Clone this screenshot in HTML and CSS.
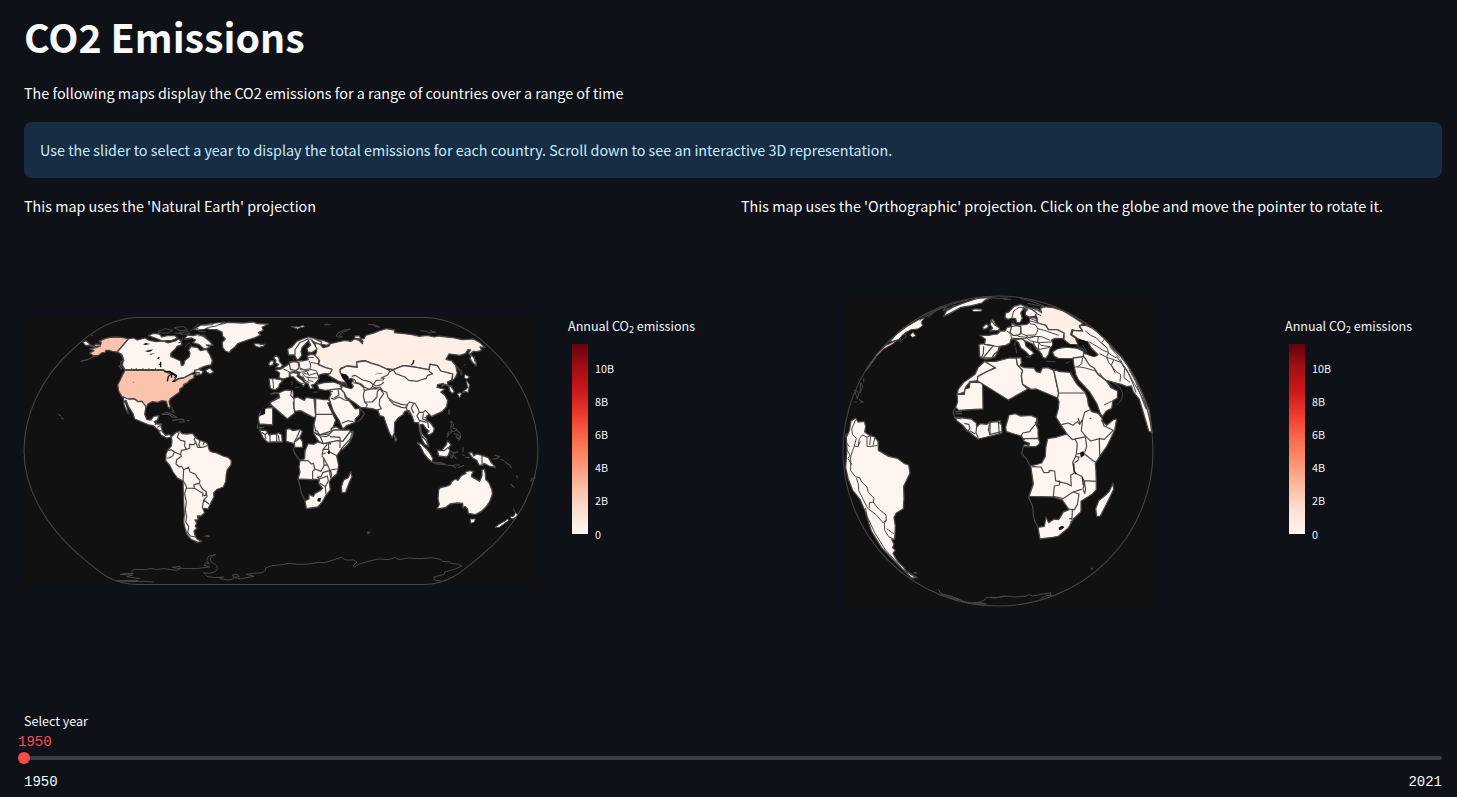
FILE: index.html
```html
<!DOCTYPE html>
<html lang="en">
<head>
<meta charset="utf-8">
<title>CO2 Emissions</title>
<link rel="stylesheet" href="styles.css">
</head>
<body>
<main class="page">
  <h1 class="title">CO2 Emissions</h1>
  <p class="intro">The following maps display the CO2 emissions for a range of countries over a range of time</p>
  <div class="alert"><span class="alert-text">Use the slider to select a year to display the total emissions for each country. Scroll down to see an interactive 3D representation.</span></div>
  <section class="columns">
    <div class="column">
      <p class="caption cap-one">This map uses the 'Natural Earth' projection</p>
      <div class="chart">
        <div class="plot">
          <svg class="map" width="516" height="270" viewBox="23 316 516 270">
            <rect x="24" y="317" width="514" height="268" fill="#111"/>
            <!-- North America -->
            <g transform="translate(10 305) scale(.33333)">
              <path class="us" d="M238 122L252 122 258 117 272 118 274 112 267 109 285 101 300 97 318 96 340 98 355 102 322 141 306 139 298 136 288 136 285 143 276 143 264 152 248 151 239 144 252 137 240 131 258 128 272 123 252 125Z"/>
              <path class="ru" d="M218 112L228 107 242 119 232 122 225 120Z"/>
              <path class="c" d="M355 102L370 99 382 105 405 99 418 106 440 110 460 108 474 114 496 108 505 102 513 107 516 119 501 124 496 132 483 144 482 154 499 162 512 168 514 182 521 180 524 167 538 155 540 145 536 135 543 125 562 127 571 137 590 133 600 150 607 166 604 179 583 184 568 191 552 201 535 211 520 219 506 220 490 230 499 213 490 205 473 202 460 194 345 194 337 180 340 167 337 151 322 141Z"/>
              <path class="us" d="M345 196L460 196 474 204 490 206 500 215 490 230 508 221 521 219 545 207 553 209 551 220 538 226 533 233 522 238 518 247 510 251 508 262 495 271 481 281 477 290 481 304 478 311 473 305 469 289 456 287 443 292 427 290 414 297 409 306 401 302 396 289 384 290 375 282 353 284 335 274 326 258 323 240 331 224 339 207Z"/>
              <path class="c" d="M340 276L355 282 373 282 384 290 396 289 408 305 404 328 411 344 423 345 431 334 447 332 442 345 433 350 440 357 455 357 453 365 458 381 467 391 479 388 484 396 470 399 453 390 444 374 430 362 417 360 396 351 374 342 369 326 355 304 348 286 344 288 350 304 355 326 348 315 342 299Z"/>
              <path class="c" d="M552 197L566 193 580 199 575 207 559 211 556 203 570 204M588 195L600 189 611 201 600 207 588 200Z"/>
              <path class="l" d="M440 350L435 360M455 357L442 368M458 378L446 377M456 328L470 322 482 326 500 337 487 336 476 328ZM486 346L505 343 520 343 523 350 505 351M530 347h8M486 305v8l6 5M484 320l10 2M145 328l8 5M154 338l7 5M212 169L235 163 250 155 264 152M322 141L334 148 342 166 332 171 331 181 342 190M325 181l11 13M244 89l5 3M365 194v-4m14 4v-4m20 4v-4m18 4v-4m20 4v-4"/>
              <path class="c" d="M585 69L607 59 635 57 654 52 697 54 730 51 742 56 775 57 756 67 760 76 745 83 752 90 735 98 713 105 696 111 683 116 674 127 664 134 658 143 646 138 638 127 637 112 646 102 638 93 636 81 620 74 598 73Z"/>
              <path class="c" d="M732 117L740 115 752 118 766 118 760 124 747 127 736 123Z"/>
              <path class="c" d="M524 102L532 90 550 92 564 88 580 94 598 108 609 121 589 120 600 127 582 132 568 119 548 113 557 105 545 99Z"/>
              <path class="c" d="M415 92L430 85 448 87 456 96 472 92 495 92 502 99 486 106 458 108 435 99Z"/>
              <path class="c thin" d="M553 72L572 61 602 56 645 51 618 63 596 67 583 73 560 75Z"/>
              <path class="l thin" d="M443 80L466 71 488 76 474 84 454 84ZM492 68L520 64 534 75 510 77ZM508 82l28-2 4 7-27 1ZM518 97l-3 13-10 4M525 126l12-13 8 9-8 5M565 78l23 3M540 76l25-6M550 69l17-13M580 61l30-2M590 98l-7-9-18 4M515 86l-22-2"/>
              <path fill="#111" d="M399 118l9-4 12 3-14 3ZM405 138l24-5-6 6-9 2ZM418 147l18-2-14 4Z"/>
              <path d="M443 162l5-5M452 170v17m-5-10l4 2M463 200l16-1 10 7M472 229l3-15 9-7 1 11M485 207l14 4-5 8M487 230l10-3" fill="none" stroke="#111" stroke-width="4"/>
              <circle cx="370" cy="232" r="1.5" fill="#654"/>
            </g>
            <!-- South America -->
            <g transform="translate(10 420) scale(.33333)">
              <path class="c" d="M484 50L497 38 510 33 516 41 531 42 548 40 556 52 568 61 580 64 592 70 597 88 602 95 620 99 639 108 654 112 664 122 663 135 652 149 649 162 647 185 640 201 620 209 611 219 612 231 603 248 594 267 578 264 584 278 573 288 562 288 565 299 555 300 560 309 556 319 561 325 552 333 556 349 562 358 576 364 563 367 542 357 530 342 524 320 521 306 523 285 521 250 519 183 502 174 489 156 479 136 467 122 468 103 473 90 484 78 486 65Z"/>
              <path class="l" d="M508 36L502 51 512 61 525 64 524 79 529 88 514 91 512 104 493 96 484 89 473 92M493 96L488 108 477 114 470 114M512 101L514 109 500 119 498 132 508 141 514 138 521 149 520 168 519 182 527 195 530 204 553 205 552 194 568 190 570 181 562 173 557 163 540 156 536 142 521 149M529 88L540 84 538 73 552 74 557 66 552 58 560 49M557 66L563 82 579 82 591 77M570 62L566 74 571 82M583 65L579 75M553 205L568 214 579 220 578 228 587 226 589 215 578 208 569 193M589 216L591 230 581 240 577 263M581 240L597 252M529 204L524 220 529 246 526 270 530 290 527 306 536 320 533 338 541 348 556 351M584 349l8-2 6 2-6 3"/>
              <path class="l thin" d="M431 486L401 484 353 485 320 482 384 481M390 476L350 470 368 465 331 463 350 460 370 461 364 455 372 448 410 449 418 445 440 448 462 446 500 451 511 446 486 442 509 439 511 445 560 446 581 443 599 441 583 436 587 428 598 432 590 421 595 409 617 403 602 413 602 424 619 436 623 446 614 456 599 460 581 458 591 469 615 473 640 471 629 476 655 480 672 476 668 465 681 462 687 470 673 472 690 477 715 472 732 469 708 463 732 460 757 458 768 450 765 445 785 437 810 435"/>
            </g>
            <!-- Europe, Asia and northern Africa -->
            <g transform="translate(250 305) scale(.33333)">
              <path class="ru" d="M195 102L220 106 240 114 232 121 210 117 219 128 236 124 241 116 263 111 285 106 302 109 314 102 327 106 337 116 339 109 329 102 315 100 313 93 328 92 333 102 342 101 347 91 375 83 386 78 409 71 434 75 433 83 462 86 486 89 508 94 531 91 553 96 566 93 590 96 609 98 637 104 670 102 689 112 705 128 690 126 695 136 681 140 670 139 661 147 671 157 678 170 679 183 667 172 660 160 663 153 655 144 662 135 654 134 646 146 630 151 597 147 588 163 606 168 617 181 622 205 613 222 607 225 608 207 600 205 572 198 562 182 540 177 537 194 500 187 486 184 460 182 430 194 410 192 386 181 367 176 345 167 320 170 322 185 290 183 272 190 270 202 281 211 290 235 270 231 245 217 234 211 246 194 225 188 205 178 209 168 194 154 200 140 196 125Z"/>
              <path class="c" d="M270 194L290 183 322 187 320 171 345 168 367 176 386 181 410 192 430 194 460 182 500 187 537 195 540 178 562 182 572 198 600 205 608 207 605 224 592 232 594 241 603 245 613 259 606 266 600 258 596 244 586 238 576 244 581 235 563 239 561 247 578 251 585 253 572 261 584 270 593 286 590 305 576 320 558 328 545 335 538 328 530 333 528 344 541 353 553 370 550 382 538 390 531 386 537 378 528 371 519 358 511 359 514 382 522 393 530 401 534 421 527 417 515 398 509 377 506 353 493 353 486 333 477 316 464 319 459 329 444 339 434 353 433 383 427 397 419 386 407 353 401 335 389 332 384 316 371 312 343 308 333 308 315 294 300 284 290 278 281 262 271 252 275 242 290 247 304 251 310 244 303 233 310 228 305 220 296 222 287 210 272 205Z"/>
              <path fill="#111" d="M271 208L286 207 296 215 293 224 301 237 307 250 292 247 290 235 278 221Z"/>
              <path class="l" d="M305 214L315 211 338 225 345 226 361 231 369 239 379 226 399 225 402 220 393 219 413 210 418 201 430 194M306 222L314 224 318 232 334 237 344 247 358 253 368 244 369 238 378 243 393 239 402 231M367 245L378 249 390 246 398 257 410 262 414 277 430 290 454 298 471 300 478 291 495 295 505 313 508 322 520 322 526 316 538 328M343 256L358 253 372 251 390 252 382 260 381 276 367 291 344 291M343 256L340 273 344 291 352 299 347 309M390 252L401 266 389 283 388 300 394 311 379 316M310 233L328 237 341 248 343 256M417 284L431 298 454 307 469 309 473 297M466 305L474 318 478 329M491 296L484 309 491 325M508 322L501 332 510 350M520 325L518 342 533 349 536 369M510 347L530 352M430 194L437 206 465 216 476 226 503 229 511 225 529 220 532 212 548 206 537 199M591 231L608 226M593 241L608 244M410 192L421 199"/>
              <path fill="none" stroke="#111" stroke-width="4" d="M483 180l7-6 1-9"/>
              <path fill="none" stroke="#7a7776" stroke-width="2.5" d="M376 209l6-4h15M393 219h11"/>
              <path class="c" d="M201 238L222 233 249 231 263 235 272 239 275 251 253 254 225 256 207 252Z"/>
              <path class="c" d="M241 254L271 251 283 264 286 278 299 289 308 301 316 312 329 310 329 329 316 342 315 352 290 362 280 371 276 367 267 346 250 319 241 293 237 278 243 269Z"/>
              <path class="l" d="M242 279L253 283 267 276 284 285 297 287M264 254L267 270 253 278M275 355L294 347 311 351M329 311L344 325 334 341 320 351M268 229L285 240M269 242L276 247 274 232 283 231 292 244M203 231L205 237"/>
              <path class="c" d="M113 132L127 125 140 109 157 102 175 96 190 99 204 106 215 111 212 119 196 113 185 106 192 116 201 132 185 143 173 141 171 130 182 120 175 108 166 117 156 128 153 140 156 151 146 163 140 163 134 150 116 150Z"/>
              <path class="l" d="M135 149L135 135 149 113 173 102 188 102M173 102L180 118"/>
              <path class="c" d="M118 170L130 171 147 167 158 168 175 164 171 153 182 148 192 149 207 164 205 179 227 188 246 193 241 205 217 207 205 211 207 222 194 237 184 240 191 249 180 251 174 236 165 232 158 218 147 211 149 203 130 200 118 203 118 216 100 222 87 218 89 204 76 195 94 192 107 183 119 176Z"/>
              <path class="de" d="M118 174L130 170 145 172 147 190 137 197 121 193Z"/>
              <path class="c" d="M57 222L68 220 92 224 98 227 88 238 86 247 75 255 61 250Z"/>
              <path class="c" d="M119 205L133 202 145 206 141 214 156 225 166 235 160 245 155 237 141 227 130 216 122 215Z"/>
              <path class="c" d="M78 151L87 159 88 169 98 180 93 187 77 188 86 178 76 174 78 166 71 159ZM56 177L62 167 71 168 70 179 59 183Z"/>
              <path class="l thin" d="M68 222L71 251M147 170L150 190 164 194 181 191 182 180 178 167M183 172L206 177M172 157L192 158M174 147L194 149M147 190L137 197 150 202 171 199 176 211 200 204 205 213M150 193L174 197 183 193 200 198 203 206M157 205L166 215 180 218 203 219M158 212L165 226 178 233M174 216L176 227 190 229M160 204L175 208M100 192L119 201M129 159l5 11M146 235l16 0M126 228v12M135 247l13 0M190 262l13-1M237 261l12-2M150 202L134 205M140 204L150 213"/>
              <path class="c" d="M62 267L68 264 86 265 89 278 66 289 47 303 36 315 29 326 25 342 28 357 68 360 68 308 47 309 63 299 112 342 134 324 130 292 138 288 131 280 129 257 107 255 85 264Z"/>
              <path fill="#111" d="M44 303L61 292 60 301 46 311 45 327 29 333 34 316Z"/>
              <path class="c" d="M132 280L142 276 163 286 168 277 192 281 197 334 191 338 152 317 135 319 132 307Z"/>
              <path class="c" d="M197 280L222 284 235 283 241 293 233 294 248 327 257 345 250 365 243 372 245 383 239 395 239 414 220 419 205 407 191 386 190 365 197 337Z"/>
              <path class="l" d="M197 328H246M195 385L207 391 220 386 241 379M125 256L122 271 132 281M86 276L62 292 62 300M192 358L198 381"/>
              <path class="c" d="M245 370L258 365 270 372 274 380 269 386 279 390 292 391 300 381 310 378 308 394 295 417 277 434 248 417 240 395Z"/>
              <path class="c" d="M29 375L49 377 58 391 62 388 81 387 84 383 95 389 97 411 61 411 53 412 39 398Z"/>
              <path class="c" d="M109 373L119 371 129 377 151 373 157 380 150 396 141 404 150 410 152 425 134 418 127 414 108 409Z"/>
              <path class="l" d="M24 358L22 369 35 370M25 367h18M35 382L46 389 52 382M45 389L48 402M60 390V409M80 388V410M85 390L88 410M150 375L140 398 132 412M269 386L276 398 293 406 277 414"/>
              <path class="c thin" d="M124 65L145 66 160 61 164 65 150 68 143 72 136 69Z"/>
              <path class="l thin" d="M222 59h20M233 56l-6 3M258 94L264 84 280 76 301 72 288 78 275 83 267 92 278 96 263 96ZM354 57l17 3 4 5 14 1-20-8M510 77l22 2 4 5 21-2-18-5M609 171L620 184 630 199 634 212M622 184l4 9M641 183l6-7M673 155l2 17M623 187L634 197 637 209M597 314L600 322 596 328ZM603 348L611 356 609 368 604 362ZM609 370L621 372 614 379 603 379M612 386L625 389 632 401 624 407M591 390L597 379M523 338l12-3M603 362v11M638 262l8 1"/>
              <path class="c thin" d="M645 208L659 216 649 222 643 218ZM649 225L658 238 655 262 642 259 636 261 653 249ZM622 266L632 263 634 267 629 278Z"/>
            </g>
            <!-- Southern Africa, Oceania and Antarctica -->
            <g transform="translate(250 430) scale(.33333)">
              <path class="c" d="M133 37L150 24 158 35 158 52 134 52ZM150 92L164 86 165 62 174 41 191 43 203 36 220 41 235 37 241 42 238 22 248 12 278 34 300 5 307 8 301 26 277 53 260 78 266 106 261 131 243 146 238 157 241 180 228 196 216 217 203 231 169 236 165 212 177 207 177 193 190 199 195 190 210 182 218 175 206 160 208 149 188 149 144 147 150 126 147 111Z"/>
              <path class="c" d="M193 8L210 14 238 12 250 0 300 0 300 5 278 34 262 32 220 41 210 18Z"/>
              <path class="l" d="M150 92L174 92 184 102 190 100 195 117 188 124 188 147 205 149M195 117L213 124 222 107 221 84 216 78 219 58 231 44 229 38M221 84L232 104 237 115 242 144 245 135 241 120 260 117M222 107L232 104M240 121L218 128 213 140 202 142 208 147 232 138 235 152 226 170 210 160M226 170L228 193M218 58L235 58 241 67 261 77M236 38V58M133 52L130 60 140 80 150 90M144 148L150 168 154 189 164 211M200 0L210 18 228 20 240 14M240 20L270 22 270 54M219 72L227 68"/>
              <path d="M233 69l3-4 2 3-2 4M205 207l6-1-2 7-5-1Z" fill="#111" stroke="#111" stroke-width="4"/>
              <path class="c" d="M302 125L306 140 298 157 287 187 276 188 274 170 281 150 295 143Z"/>
              <path class="c" d="M433 16L441 30 436 34ZM502 37L514 42 530 57 541 71 549 86 545 96 533 85 521 70 512 51ZM512 0L513 15 527 30 537 50 524 43 516 29ZM562 60L575 61 589 44 592 33 603 43 596 55 600 62 594 77 588 81 566 78Z"/>
              <path class="c" d="M656 68L667 67 671 78 680 72 696 76 715 83 724 98 737 112 717 108 702 100 697 106 687 105 680 91 668 84Z"/>
              <path class="l" d="M696 77V105M567 62L582 62 596 51M548 96L571 98 588 104 554 101ZM591 105l17 2 11 7M610 105l20 0M603 64L610 68 625 66 610 70 607 84 603 83 603 71M611 77l8 10M639 52v15M646 82h12M637 74l7 2M625 113l17-7M618 0L630 9 632 23 623 26 617 17M605 0l-3 10M590 22l9-12M728 88L744 84 750 77M734 75l13 5M752 87l12 6M765 96L780 106 784 115M782 162L793 173M799 136L803 145M841 154L847 146 856 142M351 306l9 0-3 4-6-1"/>
              <path class="c" d="M658 122L671 124 666 132 664 139 689 154 696 137 696 120 703 117 706 132 707 148 717 158 726 180 727 193 719 215 708 231 693 245 676 254 655 250 653 237 645 229 639 234 638 220 622 219 600 222 586 233 561 237 568 223 564 207 566 180 571 173 589 169 601 164 605 155 616 147 624 151 634 137 648 130 646 126Z"/>
              <path class="c thin" d="M660 267L677 267 672 277 663 280ZM735 292L747 283 763 274 773 267 777 271 748 292ZM780 261L792 258 796 248 804 255 795 263 786 267Z"/>
              <path class="l thin" d="M790 235L796 248M90 405L116 400 145 403 178 402 205 397 225 398 264 385 275 382 285 390 310 390 321 396 309 408 313 411 329 402 355 394 385 387 418 389 435 382 447 389 475 384 510 386 545 383 572 388 578 394 600 396 606 401 625 402 636 408 613 418 584 426 583 433 551 441 554 450 577 454"/>
            </g>
            <path class="frame" d="M138 317.5H424C449 317.5 474 332 488 346C522 376 538 416 538 451C538 486 519 523 484 553C463 571 449 584.500 424 584.500H138C113 584.500 101 574 78 554C43 523 24 486 24 451C24 416 40 378 74 348C92 331 113 317.500 138 317.500Z"/>
          </svg>
        </div>
        <div class="legend">
          <div class="legend-title">Annual CO<span class="sub">2</span> emissions</div>
          <div class="scale">
            <div class="bar"></div>
            <div class="ticks"><span>10B</span><span>8B</span><span>6B</span><span>4B</span><span>2B</span><span>0</span></div>
          </div>
        </div>
      </div>
    </div>
    <div class="column">
      <p class="caption cap-two">This map uses the 'Orthographic' projection. Click on the globe and move the pointer to rotate it.</p>
      <div class="chart">
        <div class="plot">
          <svg class="map" width="312" height="312" viewBox="842 295 312 312">
            <rect x="843" y="296" width="310" height="310" fill="#111"/>
            <!-- North Atlantic -->
            <g transform="translate(835 285) scale(.33333)">
              <path class="c" d="M326 94L334 78 357 65 388 53 427 40 470 37 450 46 441 54 410 62 378 67 349 83Z"/>
              <path class="c thin" d="M410 74L420 72 441 73 440 78 417 80ZM164 171L188 145 217 124 253 103 268 99 259 112 263 122 249 132 228 134 208 145 190 164Z"/>
              <path class="us thin" d="M93 258L103 240 126 207 153 181 187 165 174 177 145 193 128 210Z"/>
              <path class="l thin" d="M194 164L202 151 212 146 213 156 199 166ZM190 166l10 7M254 106L281 84 293 85 278 98M290 83L317 70 335 65 325 74 342 70 360 61M324 77l18-5M77 294L75 325 83 306 79 293M86 280l0 12M63 315L71 326 67 341 58 315M71 342L82 350 75 355M59 351h8M78 349l8 3M270 96L310 74 350 58 400 44"/>
              <path class="c thin" d="M225 151l9-9 9 11-10 4Z"/>
              <path class="c" d="M432 178L448 176 470 182 496 186 489 197 481 215 466 221 448 222 434 215ZM443 126L455 116 461 123 455 131 445 133Z"/>
              <path class="c" d="M466 108L474 102 482 118 490 128 495 136 465 138 474 130 472 120Z"/>
              <path class="l" d="M446 184L445 205 440 217"/>
              <path class="c" d="M450 228L463 231 479 229 483 245 460 259 436 271 429 275 428 287 405 290 393 305 387 322 366 328 370 312 386 292 408 277 420 268 429 248Z"/>
              <path class="c" d="M366 328L388 328 390 312 403 308 405 291 439 293 443 300 444 372 371 376 362 367 368 350Z"/>
              <path class="c" d="M360 398L376 398 409 402 424 414 425 425 435 416 456 418 464 412 496 407 501 444 468 453 430 462 417 453 396 436 382 420 366 408Z"/>
              <path class="l" d="M362 367L354 380 360 397 378 397M359 380h22M361 386h20M388 415L401 418 405 429 398 440 388 428M405 438L421 447M425 425L423 443 430 458M464 415L460 434 466 452M491 410L490 429 495 448M361 398L380 402"/>
            </g>
            <!-- Europe, north-east Africa and Asia -->
            <g transform="translate(990 285) scale(.33333)">
              <path class="ru" d="M105 63L122 69 142 72 155 83 151 71 161 65 190 68 220 78 246 94 278 115 268 126 283 137 258 138 246 134 242 149 256 159 264 178 241 179 222 164 222 144 201 134 175 134 167 121 143 114 141 98 132 83Z"/>
              <path class="c" d="M45 98L46 85 58 80 72 64 92 58 106 65 127 74 140 84 135 93 118 96 107 91 106 80 113 73 101 70 92 84 97 100 91 112 80 113 77 101 66 99 54 103Z"/>
              <path class="c" d="M-30 151L-3 151 10 148 22 147 32 138 45 138 51 127 64 125 65 115 81 121 111 118 119 112 118 97 137 99 143 114 167 121 175 134 201 134 222 144 220 161 195 160 184 166 191 180 181 188 176 207 167 221 158 216 151 202 139 191 128 177 109 169 84 161 63 163 60 174 47 181 28 184 24 198 12 208 5 219 -20 218 10 182 -16 178 -14 163Z"/>
              <path fill="#111" stroke="#4a4a4a" stroke-width="3" d="M-34 150L-14 163 -16 178 -36 181 -60 180 -60 150Z" visibility="hidden"/>
              <path class="de" d="M65 124L81 122 92 126 92 146 82 151 69 151 60 142Z"/>
              <path class="c" d="M76 165L96 161 105 169 108 184 125 197 132 205 120 214 109 202 92 188 86 173ZM5 107L14 120 29 129 25 136 0 137 8 130 0 118Z"/>
              <path class="c" d="M187 201L205 190 231 186 263 190 281 199 281 214 263 220 233 221 205 220 193 214Z"/>
              <path class="c" d="M268 121L288 121 309 130 320 139 344 161 369 192 398 219 419 249 439 285 461 333 478 377 487 444 476 438 462 390 448 343 430 321 424 303 411 305 394 298 370 292 347 285 319 264 300 248 287 229 280 217 281 203 300 211 313 215 324 209 303 188 293 170 278 169 262 160 246 149 248 136 278 138Z"/>
              <path fill="#111" d="M266 162L283 166 294 173 292 180 305 195 322 213 303 212 291 199 278 181ZM185 184L191 169 206 166 204 171 216 168 231 177 255 180 251 188 223 184 203 191Z"/>
              <path class="c" d="M249 219L282 215 298 240 313 250 327 271 349 288 363 308 383 318 382 339 369 347 365 370 349 378 337 395 331 386 321 357 299 321 265 284 258 270 252 243Z"/>
              <path class="l thin" d="M253 246L270 246 286 249 314 257 326 271M278 218L275 237 263 245M342 360L365 349 373 345M366 291L389 306 398 325 395 344 381 359M329 264L344 284 370 306M298 171L319 183 337 195 355 202 350 217 371 224 392 232 405 249M345 161L335 173 351 189 357 206 379 219M358 185L373 201 390 220M329 206L350 217 356 232 378 259 392 269 390 290M371 224L364 241 376 264M391 224L404 250 402 278 420 292M398 240L415 265 430 299 438 323M418 255L437 290 450 325 468 372M286 138L302 151 318 158 342 182M379 214L409 252 427 286 455 334 475 382"/>
              <path class="l thin" d="M92 122L93 145 107 151 137 150 144 133 136 119 119 116M141 130L169 138 206 151M120 100L139 108M118 107L143 114M50 137L63 148 64 161M64 159L86 161 103 161 130 154 155 155 180 166M84 154L108 157 122 168 145 173 184 171M105 151L120 159 137 154M145 154L143 169 153 181 181 185M129 170L137 187 150 193 179 187M146 175L145 195 158 211M69 106l6 16M75 170v13M77 187l3 18M108 214l13 4M168 229l28 1M228 235l11-5M66 98L71 78 87 67 114 69M99 70L109 81M0 38L28 40 53 39M40 43h24M90 40L130 50 168 66M112 55L138 60 165 67M269 187L288 198 287 209M279 181L291 202M260 182L276 191M132 75L143 75 149 82M140 86L153 92M-8 179L28 186"/>
              <path class="c" d="M-15 230L18 229 57 219 79 219 82 239 98 257 94 272 98 298 113 312 55 345 -38 287 -37 275 -10 260 17 249Z"/>
              <path class="c" d="M79 219L93 218 94 234 90 242 103 248 132 249 139 260 151 263 157 249 174 248 191 256 206 324 203 339 139 312 123 313 98 298 94 272 98 257 82 239Z"/>
              <path class="c" d="M57 390L76 386 91 393 122 391 141 399 138 418 144 432 145 474 104 467 93 453 72 447 49 440 47 426Z"/>
              <path class="c" d="M0 412L25 410 35 420 36 440 0 448Z"/>
              <path class="l" d="M138 396L144 409 128 427 119 440 98 444 93 454M134 411L148 419M25 410L28 448"/>
            </g>
            <!-- South America -->
            <g transform="translate(835 440) scale(.33333)">
              <path class="c" d="M32 83L36 28 34 -8 43 -28 48 -57 62 -66 69 -54 88 -56 92 -40 89 -24 103 -14 119 -9 129 4 130 31 142 38 161 49 187 55 207 70 221 75 225 99 217 116 206 139 207 176 205 206 184 219 177 232 181 258 179 299 170 299 177 312 173 323 181 330 174 340 187 363 206 382 214 394 246 413 230 414 198 383 170 355 139 322 109 273 91 216 75 178 53 151 40 118Z"/>
              <path class="l thin" d="M62 -61L50 -33 53 -16 64 -5 58 18 69 20 73 -4 82 -15 96 -9 96 19 108 20 127 16M96 -9L110 -14M107 -12L104 15M120 -8L114 17M69 20L76 4M58 18L52 34 47 51 47 92 61 110 74 113 80 126 96 141 100 158 117 174 115 187 131 207 153 225 154 242 148 249 149 271 161 290 180 299M64 115L70 132 71 151 85 179 98 205 123 224 145 249 153 239M103 205L103 188 117 186M91 204L97 230 119 278 151 329 199 382M155 266L177 282M33 25L45 45 39 56 51 74M34 8l10 13M34 -20l-3 12M235 398l8-2 2 4ZM211 391L235 409 247 414"/>
              <path class="l thin" d="M310 448L317 460 335 467 358 476 376 479 344 467 320 463M362 475L390 485 415 490M412 488L438 486 453 476 454 472 490 472 510 469M414 491L454 492 430 487"/>
            </g>
            <!-- Southern and eastern Africa -->
            <g transform="translate(990 440) scale(.33333)">
              <path class="c" d="M101 20L103 14 117 16 118 10 100 3 104 -4 145 -5 150 10 138 20Z"/>
              <path class="c" d="M122 77L134 75 155 69 166 49 167 24 173 -4 197 -8 231 -18 212 -46 198 -69 205 -94 207 -115 203 -125 206 -141 191 -211 210 -205 241 -203 253 -183 242 -198 261 -167 285 -143 292 -126 295 -105 305 -85 325 -80 337 -64 336 -57 350 -44 370 -61 380 -63 374 -29 350 20 329 49 316 70 318 94 319 149 306 163 273 184 273 215 251 236 235 264 205 289 188 292 150 297 144 262 163 259 168 231 176 248 192 237 206 239 220 216 237 209 217 180 190 171 117 169 130 132Z"/>
              <path class="l" d="M208 -141H284M214 -46L234 -51 249 -44 262 -55 269 -47 278 -63 274 -27 288 -10 302 3 328 -4 343 -2 370 -29 342 -42 335 -62M278 -63L284 -83 300 -91M231 -18L247 -1 260 -4 288 -10M264 -66l7 18M299 -65h5"/>
              <path class="l" d="M125 80L153 81 162 98 177 97 178 91 194 93 197 123 209 123 208 135 193 138 190 169 219 176 249 156 267 162 262 194 253 209 236 207M197 123L232 131 244 138 242 106 253 99 248 67 257 49 259 41 262 11M259 42L280 39 310 63 317 66M253 99L275 109 284 126 279 147 284 161 287 148 282 122 318 124M249 156L275 148M247 210L246 238M257 49L267 51 264 61 254 68M328 -4L329 49M262 11L255 -3M284 38L290 20 286 -10M100 20L95 41 109 56 120 77M115 170L128 199 130 226 134 244 145 263M237 237l7-2 4 8-8 3"/>
              <path class="l thin" d="M303 386l6-2-4 5ZM0 473L17 474 45 468 73 471 106 469 119 464 127 468 161 462 183 458 180 463 187 467 171 466 154 475"/>
              <path d="M272 39l7-3 2 9-7 5ZM208 264l8-5 4 3-5 5-6 1Z" fill="#111" stroke="#111" stroke-width="4"/>
              <path d="M251 70L253 94 259 102M277 112L280 135" fill="none" stroke="#222" stroke-width="4"/>
              <path class="c" d="M369 130L371 148 360 171 345 201 331 228 320 230 317 206 326 182 346 166 357 155Z"/>
            </g>
            <circle class="frame" cx="998" cy="451" r="155"/>
          </svg>
        </div>
        <div class="legend">
          <div class="legend-title">Annual CO<span class="sub">2</span> emissions</div>
          <div class="scale">
            <div class="bar"></div>
            <div class="ticks"><span>10B</span><span>8B</span><span>6B</span><span>4B</span><span>2B</span><span>0</span></div>
          </div>
        </div>
      </div>
    </div>
  </section>
  <section class="slider">
    <div class="label">Select year</div>
    <div class="value">1950</div>
    <div class="track"><span class="thumb"></span></div>
    <div class="range"><span>1950</span><span>2021</span></div>
  </section>
</main>
</body>
</html>
```
FILE: styles.css
```css
* { box-sizing: border-box; }
body {
  margin: 0;
  height: 797px;
  overflow: hidden;
  background: #0e1117;
  color: #fafafa;
  font-family: "Noto Sans CJK SC", "Noto Sans", sans-serif;
  font-size: 14.33px;
}
.page { padding: 9px 15px 0 24px; }
p, h1 { margin: 0; }
.title { height: 53px; font-size: 39.3px; line-height: 53px; font-weight: 700; white-space: nowrap; }
.intro { margin-top: 18px; height: 25px; line-height: 25px; white-space: nowrap; }
.alert {
  margin-top: 17px;
  height: 56px;
  padding: 16px;
  line-height: 24px;
  border-radius: 8px;
  background: #172d43;
  color: #c7ebff;
  white-space: nowrap;
}
.columns { display: grid; grid-template-columns: 1fr 1fr; gap: 16px; margin-top: 15px; }
.caption { height: 25px; line-height: 25px; margin-bottom: 1px; white-space: nowrap; }
.chart { display: flex; gap: 30px; height: 464px; align-items: center; }
.plot { display: flex; justify-content: center; width: 514px; flex: none; }
.map { display: block; flex: none; margin: 0 -1px; }
.c, .us, .ru, .de { stroke: #484848; stroke-width: 3.8; stroke-linejoin: round; }
.c { fill: #fff5f0; }
.us { fill: #fcc3ac; }
.ru { fill: #ffeee6; }
.de { fill: #fff0e9; }
.l { fill: none; stroke: #484848; stroke-width: 3.5; stroke-linejoin: round; }
.thin { stroke-width: 3; }
.frame { fill: none; stroke: #444; stroke-width: 1.1; }
.legend { margin-bottom: 52px; color: #f2f5fa; }
.legend-title { height: 27px; line-height: 17px; font-size: 12.56px; white-space: nowrap; }
.sub { font-size: 9px; line-height: 0; position: relative; top: 2px; }
.scale { display: flex; padding-left: 4px; gap: 7px; }
.bar {
  width: 16px;
  height: 190px;
  background: linear-gradient(#67000d, #a50f15, #cb181d, #ef3b2c, #fb6a4a, #fc9272, #fcbba1, #fee0d2, #fff5f0);
}
.ticks { display: flex; flex-direction: column; height: 190px; padding-top: 8px; font-size: 10.75px; }
.ticks span { flex: none; height: 33px; line-height: 33px; }
.ticks span:last-child { margin-top: 1px; }
.slider { margin-top: 28px; }
.label { height: 20px; line-height: 20px; font-size: 12.54px; }
.value { margin: 1px 0 0 -6px; font: 14px/20px "Liberation Mono", monospace; color: #ff4b4b; }
.track { position: relative; height: 4px; margin-top: 4px; background: #3a3b44; border-radius: 2px; }
.thumb { position: absolute; left: -6px; top: -4px; width: 12px; height: 12px; border-radius: 50%; background: #ff4b4b; }
.range { display: flex; justify-content: space-between; margin-top: 12px; font: 14px/20px "Liberation Mono", monospace; }
```
